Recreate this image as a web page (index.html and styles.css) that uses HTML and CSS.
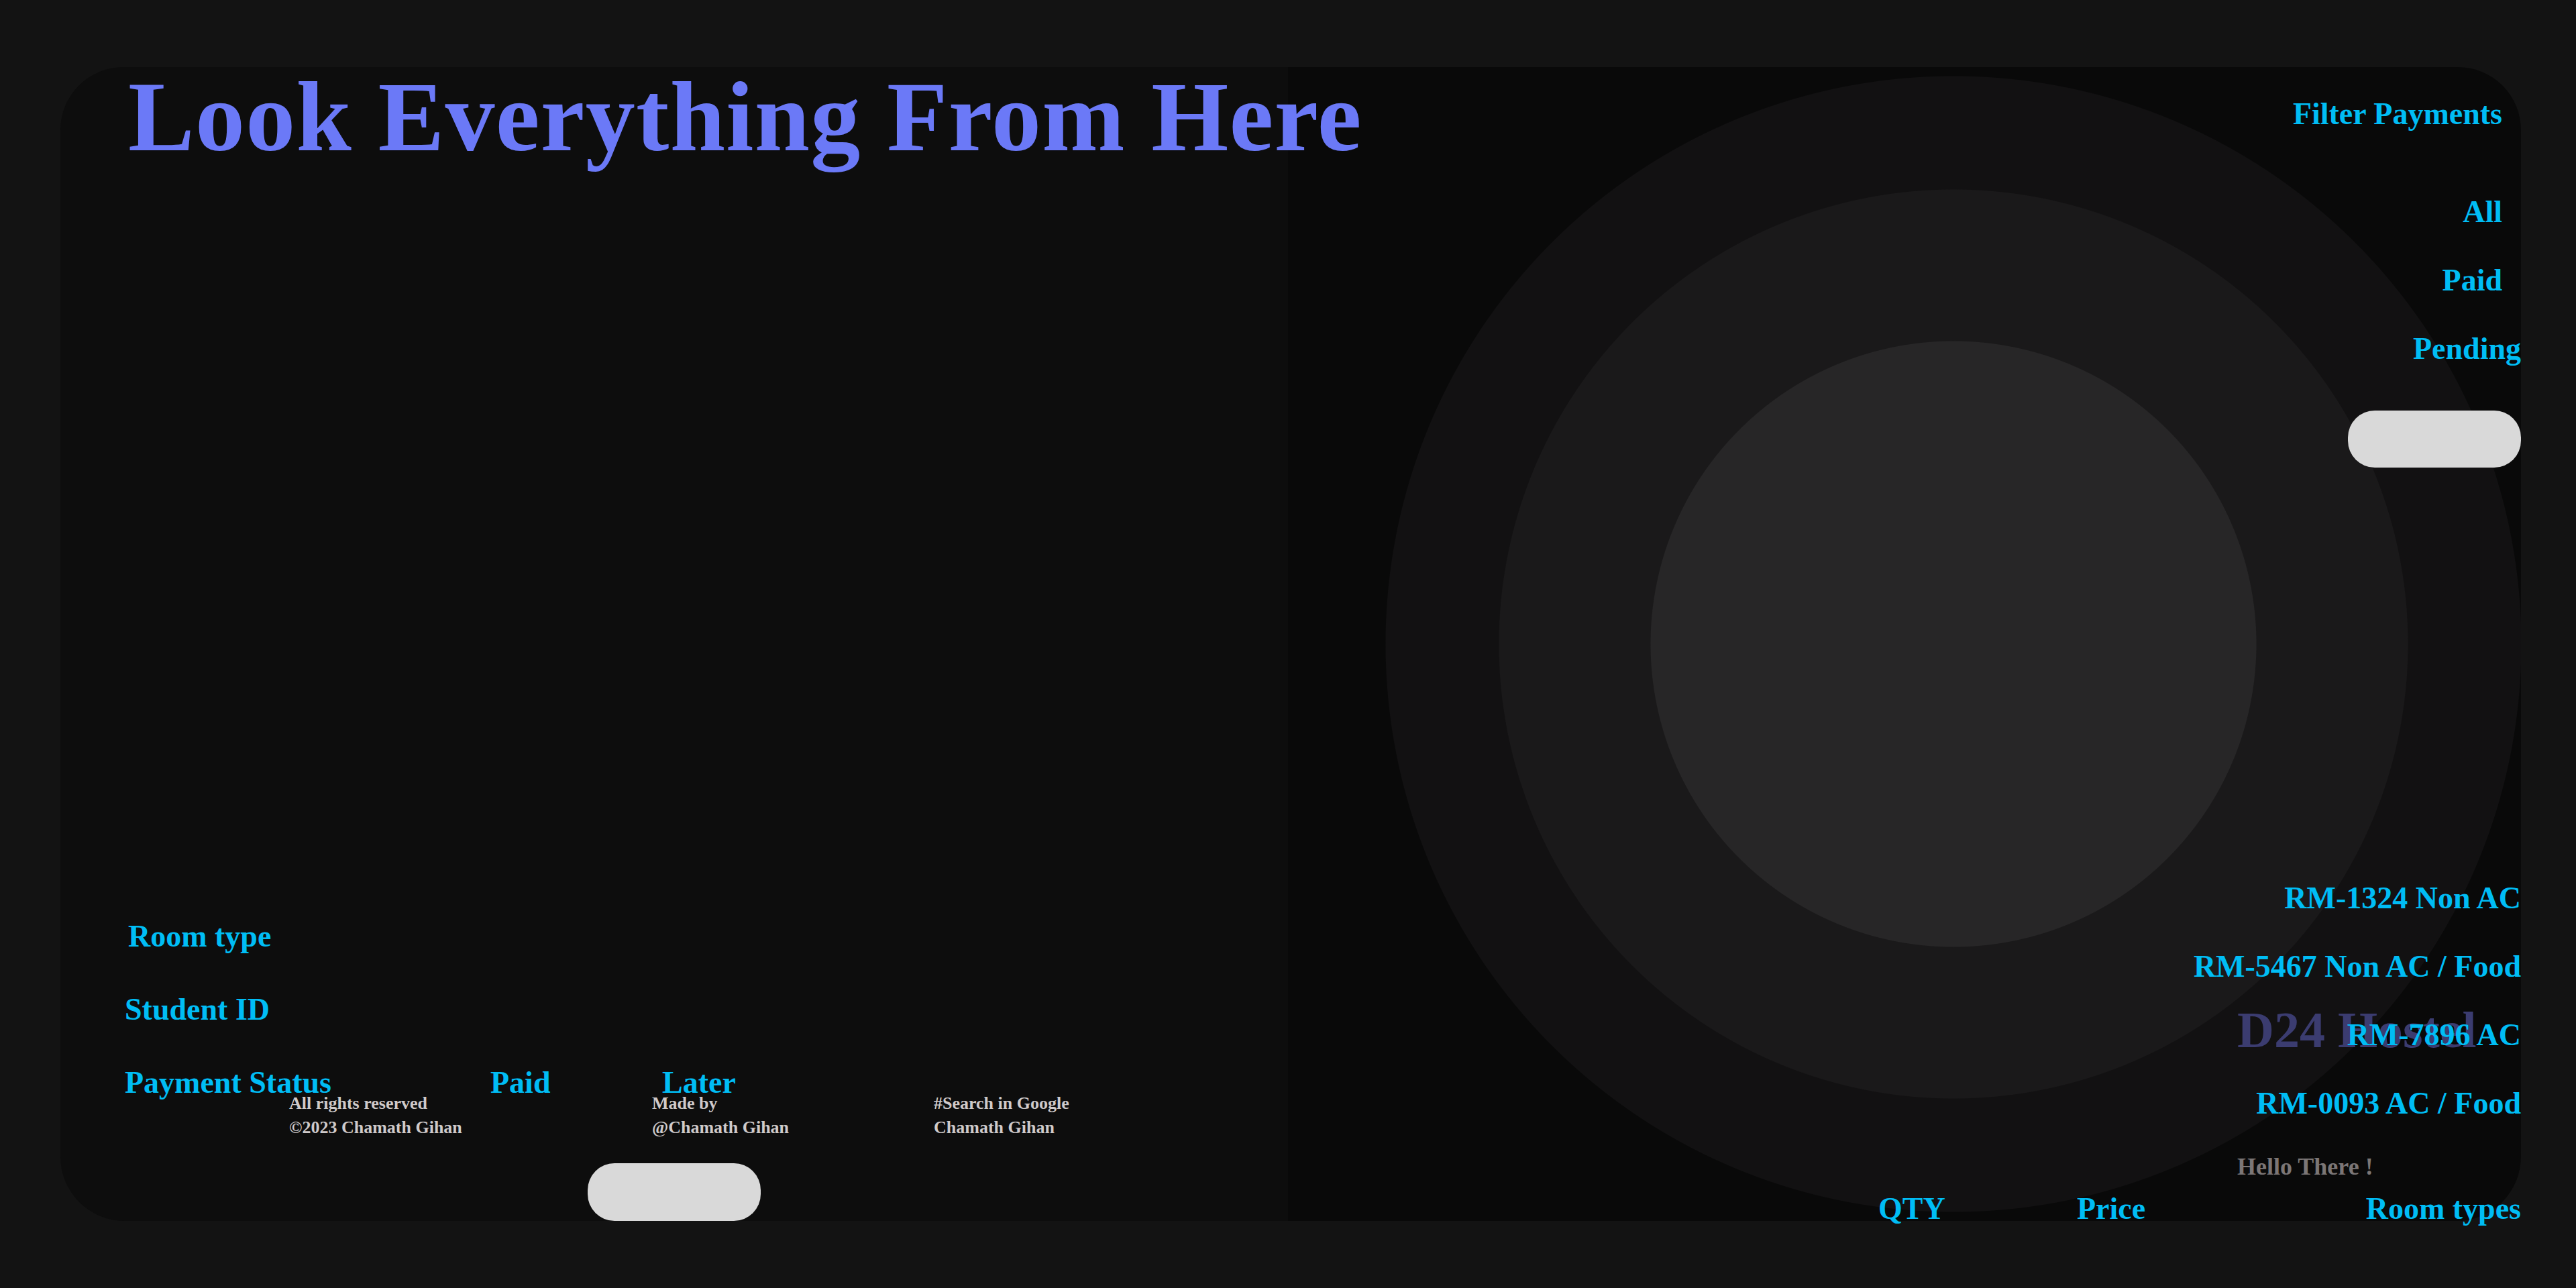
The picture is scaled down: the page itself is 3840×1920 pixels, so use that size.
FILE: index.html
```html
<!DOCTYPE html>
<html lang="en">
<head>
<meta charset="utf-8">
<title>D24 Hostel - Payments</title>
<link rel="stylesheet" href="styles.css">
</head>
<body>
<main class="card">
  <section class="panel panel-left">
    <h1 class="title">Look Everything From Here</h1>
    <div class="left-bottom">
      <div class="field field-room">Room type</div>
      <div class="field">Student ID</div>
      <div class="field status-row"><span>Payment Status</span><span>Paid</span><span>Later</span></div>
      <footer class="footer">
        <div class="foot-col"><p>All rights reserved</p><p>©2023 Chamath Gihan</p></div>
        <div class="foot-col"><p>Made by</p><p>@Chamath Gihan</p></div>
        <div class="foot-col"><p>#Search in Google</p><p>Chamath Gihan</p></div>
      </footer>
      <button class="pill pill-bottom" type="button"></button>
    </div>
  </section>
  <section class="panel panel-right">
    <div class="right-top">
      <h2 class="filter-title">Filter Payments</h2>
      <ul class="filter-list">
        <li class="inset">All</li>
        <li class="inset">Paid</li>
        <li>Pending</li>
      </ul>
      <button class="pill pill-top" type="button"></button>
    </div>
    <div class="right-bottom">
      <ul class="rooms">
        <li>RM-1324 Non AC</li>
        <li>RM-5467 Non AC / Food</li>
        <li>RM-7896 AC</li>
        <li>RM-0093 AC / Food</li>
      </ul>
      <div class="brand">
        <span class="brand-name">D24 Hostel</span>
        <p class="hello">Hello There !</p>
      </div>
      <div class="table-head"><span>QTY</span><span>Price</span><span class="th-right">Room types</span></div>
    </div>
  </section>
</main>
</body>
</html>
```

FILE: styles.css
```css
* { box-sizing: border-box; }

html, body {
  margin: 0;
  background: #131313;
}

body {
  padding: 100px 82px 100px 90px;
  font-family: "Liberation Serif", "DejaVu Serif", serif;
  font-weight: 700;
  color: #00bdf5;
}

p, h1, h2, ul { margin: 0; padding: 0; }
ul { list-style: none; }

.card {
  height: 1720px;
  display: grid;
  grid-template-columns: 1830px 1fr;
}

.panel {
  height: 100%;
  display: flex;
  flex-direction: column;
  justify-content: space-between;
}

.panel-left {
  position: relative;
  z-index: 2;
  background: #0d0d0d;
  border-radius: 94px 0 0 96px;
  padding-left: 96px;
}

.panel-right {
  position: relative;
  z-index: 1;
  background-color: #090909;
  background-image: radial-gradient(circle at calc(100% - 846px) 50%,
      #272627 0, #272627 451px,
      #1a191a 452px, #1a191a 677px,
      #121112 678px, #121112 846px,
      rgba(9, 9, 9, 0) 847px);
  border-radius: 0 94px 96px 0;
  padding-top: 52px;
  align-items: flex-end;
}

.title {
  font-size: 148px;
  line-height: 148px;
  letter-spacing: 1.3px;
  color: #6b79f7;
  font-weight: 700;
  margin-left: 5px;
  white-space: nowrap;
}

/* left bottom block */
.left-bottom {
  display: flex;
  flex-direction: column;
}

.field {
  font-size: 46px;
  line-height: 36px;
  height: 36px;
  white-space: nowrap;
}
.field + .field { margin-top: 73px; }
.field-room { margin-left: 5px; }

.status-row {
  display: grid;
  grid-template-columns: 545px 256px auto;
}

.footer {
  display: grid;
  grid-template-columns: 541px 420px auto;
  margin-left: 245px;
  color: #cfcaca;
  font-size: 26px;
  line-height: 26px;
}
.foot-col {
  display: flex;
  flex-direction: column;
  gap: 10px;
}

.pill {
  display: block;
  width: 258px;
  height: 86px;
  border: 0;
  border-radius: 40px;
  background: #d9d9d9;
  padding: 0;
}
.pill-bottom {
  margin-top: 40px;
  margin-left: 690px;
}

/* right column */
.right-top {
  display: flex;
  flex-direction: column;
  align-items: flex-end;
}

.filter-title {
  font-size: 46px;
  line-height: 36px;
  font-weight: 700;
  margin-right: 28px;
}

.filter-list {
  margin-top: 110px;
  display: flex;
  flex-direction: column;
  align-items: flex-end;
  gap: 66px;
  font-size: 46px;
  line-height: 36px;
}
.filter-list .inset { margin-right: 28px; }

.pill-top {
  margin-top: 74px;
  height: 85px;
}

.right-bottom {
  display: flex;
  flex-direction: column;
  align-items: flex-end;
}

.rooms {
  position: relative;
  z-index: 1;
  display: flex;
  flex-direction: column;
  align-items: flex-end;
  gap: 66px;
  font-size: 46px;
  line-height: 36px;
  white-space: nowrap;
}

.brand {
  position: relative;
  width: 423px;
  margin-top: 58px;
}
.brand-name {
  position: absolute;
  left: 0;
  top: -224px;
  z-index: 0;
  font-size: 76px;
  line-height: 76px;
  color: #3b3c70;
  white-space: nowrap;
}
.hello {
  font-size: 36px;
  line-height: 36px;
  color: #7b7676;
  white-space: nowrap;
}

.table-head {
  margin-top: 27px;
  width: 958px;
  display: grid;
  grid-template-columns: 296px auto 1fr;
  font-size: 46px;
  line-height: 36px;
  white-space: nowrap;
}
.th-right { text-align: right; }
```
